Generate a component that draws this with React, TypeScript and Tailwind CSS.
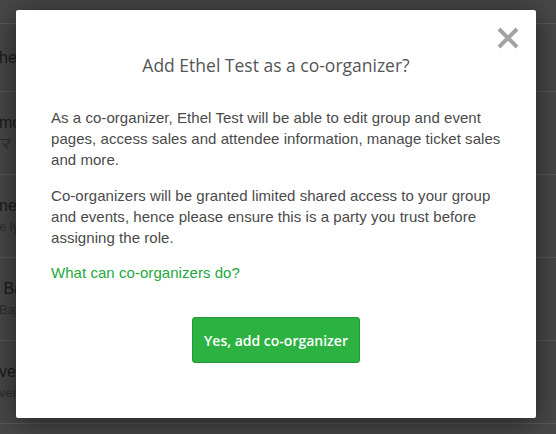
import React from 'react';

const rows = [
  { name: 'hel', sub: '', h: 'h-[68px]' },
  { name: 'mo', sub: 'マ /', h: 'h-[83px]' },
  { name: 'ne', sub: 'e ly', h: 'h-[83px]' },
  { name: ' Ba', sub: 'Bay', h: 'h-[83px]' },
  { name: 've', sub: 'ven', h: 'h-[83px]' },
];

export default function App() {
  return (
    <div
      className="relative w-[556px] h-[434px] overflow-hidden bg-[#484848]"
      style={{ fontFamily: '"Liberation Sans", Arial, sans-serif' }}
    >
      <div className="h-[24px] border-b border-[#595959]" />
      {rows.map(r => (
        <div key={r.name} className={`${r.h} border-b border-[#595959] flex flex-col justify-center`}>
          <div className="text-[16px] leading-[20px] text-[#1c1c1c] whitespace-pre -ml-[1px]">{r.name}</div>
          {r.sub && (
            <div
              className="text-[13px] leading-[18px] text-[#2e2e2e] whitespace-nowrap mt-[2px] -ml-[1px]"
              style={{ fontFamily: '"Liberation Sans", "Noto Sans CJK JP", sans-serif' }}
            >
              {r.sub}
            </div>
          )}
        </div>
      ))}

      <div className="absolute left-[16px] top-[10px] w-[520px] h-[408px] bg-white rounded-[2px] shadow-[0_4px_30px_rgba(0,0,0,0.55)] px-[35px]">
        <button className="absolute right-[17px] top-[17px] w-[22px] h-[22px] flex items-center justify-center">
          <svg width="22" height="22" viewBox="0 0 22 22">
            <path d="M2 2 L20 20 M20 2 L2 20" stroke="#a3a3a3" strokeWidth="4" strokeLinecap="butt" />
          </svg>
        </button>

        <h2
          className="text-center text-[17.5px] leading-[24px] text-[#555] pt-[43px]"
          style={{ fontFamily: '"Open Sans", "Noto Sans", sans-serif' }}
        >
          Add Ethel Test as a co-organizer?
        </h2>

        <div className="mt-[30px] text-[15px] leading-[21px] text-[#4a4a4a] tracking-[0.05px]">
          <p>
            As a co-organizer, Ethel Test will be able to edit group and event pages, access sales and attendee
            information, manage ticket sales and more.
          </p>
          <p className="mt-[15px]">
            Co-organizers will be granted limited shared access to your group and events, hence please ensure this
            is a party you trust before assigning the role.
          </p>
          <p className="mt-[14px]">
            <a href="#" className="text-[#22a93c]">What can co-organizers do?</a>
          </p>
        </div>

        <div className="flex justify-center mt-[34px]">
          <button
            className="w-[168px] h-[46px] rounded-[3px] bg-[#2bb241] border border-[#239a37] text-white text-[14px] font-semibold"
            style={{ fontFamily: '"Open Sans", "Noto Sans", sans-serif' }}
          >
            Yes, add co-organizer
          </button>
        </div>
      </div>
    </div>
  );
}
